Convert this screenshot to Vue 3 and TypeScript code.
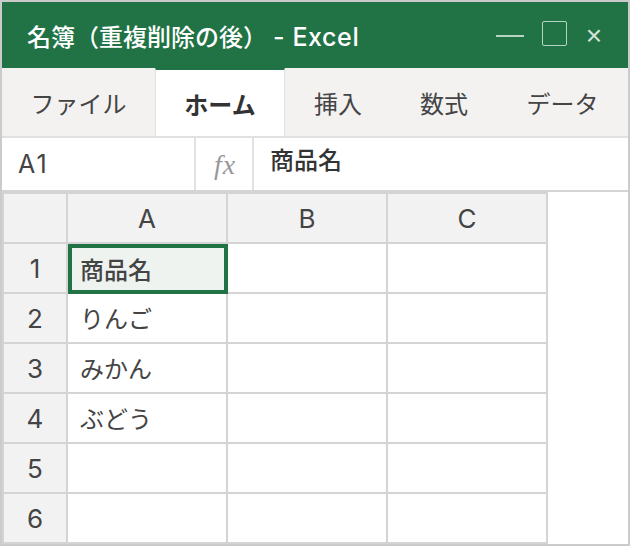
<template>
  <div class="window">
    <div class="titlebar">
      <span class="title">名簿（重複削除の後）<span class="app-name">- Excel</span></span>
      <div class="win-controls">
        <span class="minimize"></span>
        <span class="maximize"></span>
        <span class="close">×</span>
      </div>
    </div>

    <div class="tabs">
      <div
        v-for="tab in tabs"
        :key="tab.label"
        class="tab"
        :class="{ active: tab.label === 'ホーム' }"
        :style="{ width: tab.width + 'px' }"
      >
        {{ tab.label }}
      </div>
    </div>

    <div class="formula-bar">
      <div class="name-box">A1</div>
      <div class="fx">fx</div>
      <div class="formula">商品名</div>
    </div>

    <div class="sheet-area">
      <div class="sheet">
        <div class="head corner"></div>
        <div v-for="col in columns" :key="col" class="head col-head">{{ col }}</div>
        <template v-for="(row, i) in rows" :key="i">
          <div class="head row-head">{{ i + 1 }}</div>
          <div
            v-for="(cell, j) in row"
            :key="j"
            class="cell"
            :class="{ selected: i === 0 && j === 0 }"
          >
            {{ cell }}
          </div>
        </template>
      </div>
    </div>
  </div>
</template>

<script setup lang="ts">
const tabs = [
  { label: 'ファイル', width: 153 },
  { label: 'ホーム', width: 130 },
  { label: '挿入', width: 106 },
  { label: '数式', width: 106 },
  { label: 'データ', width: 131 },
];

const columns = ['A', 'B', 'C'];

const rows: string[][] = [
  ['商品名', '', ''],
  ['りんご', '', ''],
  ['みかん', '', ''],
  ['ぶどう', '', ''],
  ['', '', ''],
  ['', '', ''],
];
</script>

<style>
html,
body {
  margin: 0;
  background: #fff;
}
</style>

<style scoped>
.window {
  width: 630px;
  height: 546px;
  box-sizing: border-box;
  border: 2px solid #cbcbcb;
  display: flex;
  flex-direction: column;
  background: #fff;
  font-family: Inter, "Noto Sans CJK JP", sans-serif;
  color: #444;
  overflow: hidden;
}

.titlebar {
  height: 66px;
  flex: none;
  background: #217346;
  color: #fff;
  display: flex;
  align-items: center;
  justify-content: space-between;
  padding: 0 26px 0 25px;
}
.title {
  font-size: 24px;
  font-weight: 500;
  white-space: pre;
}
.app-name {
  font-size: 25px;
  letter-spacing: 0.6px;
  margin-left: 6px;
}
.win-controls {
  display: flex;
  align-items: center;
  padding-top: 2px;
}
.minimize {
  width: 28px;
  height: 2px;
  background: #b7d3c4;
  margin-right: 18px;
}
.maximize {
  width: 25px;
  height: 25px;
  box-sizing: border-box;
  border: 1px solid #b7d3c4;
  border-radius: 2px;
  margin: -5px 19px 0 0;
}
.close {
  font-family: "Liberation Sans", sans-serif;
  font-size: 28px;
  line-height: 24px;
  color: #d3e3da;
}

.tabs {
  height: 70px;
  flex: none;
  box-sizing: border-box;
  display: flex;
  background: #f3f2f1;
  border-bottom: 2px solid #e1e1e1;
}
.tab {
  flex: none;
  box-sizing: border-box;
  display: flex;
  align-items: center;
  justify-content: center;
  font-size: 24px;
  color: #444;
  white-space: nowrap;
}
.tab.active {
  background: #fff;
  color: #333;
  font-weight: 700;
  border-top: 2px solid #217346;
  border-left: 1px solid #e1e1e1;
  border-right: 1px solid #e1e1e1;
}

.formula-bar {
  height: 54px;
  flex: none;
  box-sizing: border-box;
  display: flex;
  border-bottom: 2px solid #d4d4d4;
}
.name-box {
  width: 194px;
  box-sizing: border-box;
  padding-left: 16px;
  display: flex;
  align-items: center;
  font-size: 25px;
  letter-spacing: 2px;
  border-right: 2px solid #e1e1e1;
}
.fx {
  width: 58px;
  box-sizing: border-box;
  display: flex;
  align-items: center;
  justify-content: center;
  padding: 2px 0 0 2px;
  font-family: "Liberation Serif", serif;
  font-style: italic;
  font-size: 28px;
  letter-spacing: 1px;
  color: #999;
  border-right: 2px solid #e1e1e1;
}
.formula {
  flex: 1;
  padding: 4px 0 0 16px;
  font-size: 24px;
  font-weight: 500;
  line-height: 38px;
  color: #333;
}

.sheet-area {
  flex: 1;
  display: flex;
  align-items: flex-start;
}
.sheet {
  display: grid;
  grid-template-columns: 62px repeat(3, 158px);
  grid-auto-rows: 48px;
  gap: 2px;
  padding: 2px;
  background: #d4d4d4;
}
.head {
  background: #f2f2f2;
  display: flex;
  align-items: center;
  justify-content: center;
  font-size: 26px;
  color: #444;
}
.cell {
  background: #fff;
  display: flex;
  align-items: center;
  box-sizing: border-box;
  padding: 0 0 2px 12px;
  font-size: 24px;
  color: #444;
}
.cell.selected {
  background: #eef3f0;
  font-weight: 500;
  position: relative;
  margin: 0 -2px -2px 0;
  padding-left: 8px;
  border: 4px solid #217346;
}
</style>
